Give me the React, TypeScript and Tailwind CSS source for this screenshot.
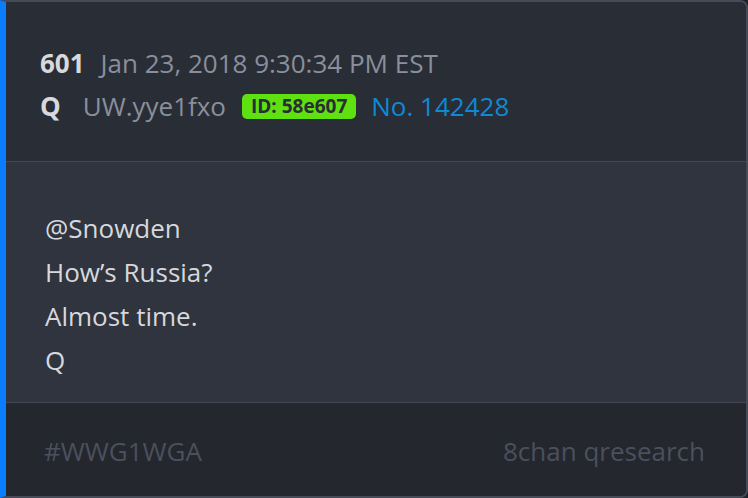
export default function App() {
  return (
    <div className="w-[748px] h-[498px] bg-[#1e2127]">
      <div
        className="w-full h-full flex flex-col overflow-hidden rounded-r-[8px] border-2 border-[#464c57] border-l-[6px] border-l-[#0a7dff] text-[26px]"
        style={{ fontFamily: '"Open Sans", "Noto Sans", sans-serif' }}
      >
        {/* cabeçalho */}
        <div className="h-[160px] shrink-0 bg-[#292d36] pl-[34px] pt-[45px] flex flex-col gap-[11px] border-b border-[#414753]">
          <div className="flex items-center h-[32px] leading-none">
            <span className="font-bold text-[#d8d9dc]">601</span>
            <span className="ml-[16px] text-[#8a8f9b]">Jan 23, 2018 9:30:34 PM EST</span>
          </div>
          <div className="flex items-center h-[32px] leading-none">
            <span className="font-bold text-[#d8d9dc]">Q</span>
            <span className="ml-[22px] text-[#8a8f9b]">UW.yye1fxo</span>
            <span className="ml-[16px] rounded-[5px] bg-[#5fe010] px-[9px] py-[3px] text-[19px] font-bold text-[#2a2d33]">
              ID: 58e607
            </span>
            <span className="ml-[15px] text-[#0d8ad4]">No. 142428</span>
          </div>
        </div>

        {/* mensagem */}
        <div className="flex-1 bg-[#2f343e] pl-[39px] pt-[44px] text-[#d6d8dc] leading-[44px] border-b border-[#414753]">
          <div>@Snowden</div>
          <div>How’s Russia?</div>
          <div>Almost time.</div>
          <div>Q</div>
        </div>

        {/* rodapé */}
        <div className="h-[93px] shrink-0 bg-[#24272e] pl-[38px] pr-[41px] flex items-center justify-between text-[#4b505c] pt-[4px]">
          <span>#WWG1WGA</span>
          <span>8chan qresearch</span>
        </div>
      </div>
    </div>
  );
}
